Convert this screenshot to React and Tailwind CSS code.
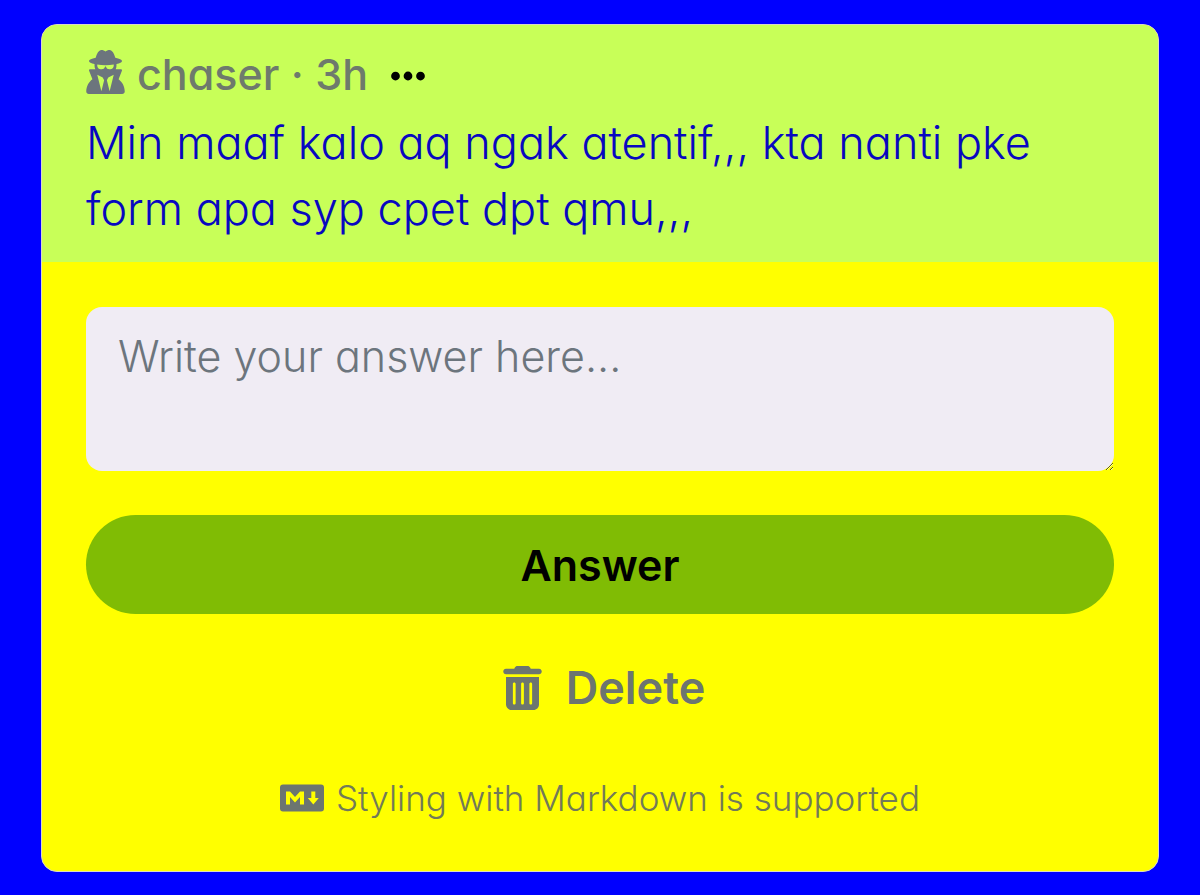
import React from 'react';
import { FaEllipsis, FaTrashCan, FaUserSecret } from 'react-icons/fa6';

function MarkdownIcon() {
  return (
    <svg viewBox="0 0 44 27" fill="currentColor" className="h-7 w-11 text-[#6c7570]" aria-hidden="true">
      <path
        fillRule="evenodd"
        d="M3 0H41A3 3 0 0 1 44 3V24A3 3 0 0 1 41 27H3A3 3 0 0 1 0 24V3A3 3 0 0 1 3 0ZM6 7V20H10V12.6L15 18L20 12.6V20H24V7H20L15 12.6L10 7ZM31.3 7V13.4H27.8L33.3 20L38.8 13.4H35.3V7Z"
      />
    </svg>
  );
}

function App() {
  return (
    <div className="min-h-screen bg-[#0000ff] px-[41px] py-6 font-['Inter',sans-serif] [font-feature-settings:'cv11']">
      <article className="overflow-hidden rounded-2xl border border-[#d8d8c8] bg-[#ffff00]">
        {/* Question */}
        <header className="bg-[#c8ff58] px-11 pt-4 pb-5">
          <div className="flex items-center text-[#6e7a6c]">
            <FaUserSecret className="mr-3 mb-1 h-11 w-[39px] text-[#6c757d]" />
            <span className="text-[43px] leading-[66px] font-medium">chaser · 3h</span>
            <button type="button" aria-label="More options" className="mt-1 ml-5 text-black">
              <FaEllipsis className="size-10" />
            </button>
          </div>
          <p className="mt-[3px] text-[45px] leading-[66px] font-light text-[#0808c0]">
            Min maaf kalo aq ngak atentif,,, kta nanti pke form apa syp cpet dpt qmu,,,
          </p>
        </header>

        {/* Answer form */}
        <form className="flex flex-col px-11 pt-[45px] pb-11">
          <textarea
            aria-label="Your answer"
            placeholder="Write your answer here..."
            className="h-[164px] w-full rounded-2xl bg-[#f0ecf4] px-8 py-4 text-[43px] leading-[66px] font-light text-black placeholder:text-[#6c757d] focus:outline-none"
          />
          <button
            type="submit"
            className="mt-11 h-[99px] rounded-full bg-[#80bc04] text-[43px] leading-[66px] font-semibold text-black"
          >
            Answer
          </button>
          <button
            type="button"
            className="mt-6 flex h-[99px] items-center justify-center gap-6 pl-2 text-[45px] leading-[66px] font-semibold text-[#6c7570]"
          >
            <FaTrashCan className="h-11 w-[39px]" />
            Delete
          </button>
          <p className="mt-8 flex items-center justify-center gap-3 text-[35px] leading-[58px] font-light text-[#727a58]">
            <MarkdownIcon />
            Styling with Markdown is supported
          </p>
        </form>
      </article>
    </div>
  );
}

export default App;
